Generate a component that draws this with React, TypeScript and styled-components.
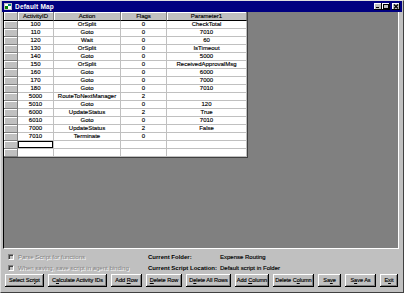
import React from 'react';
import styled, { createGlobalStyle } from 'styled-components';

const Global = createGlobalStyle`
  html, body { margin: 0; padding: 0; background: #c0c0c0; }
  body {
    width: 404px; height: 293px; overflow: hidden;
    font-family: "Liberation Sans", Arial, sans-serif;
  }
`;

const Window = styled.div`
  width: 404px;
  height: 293px;
  box-sizing: border-box;
  display: flex;
  flex-direction: column;
  background: #c0c0c0;
  border-top: 1px solid #dfdfdf;
  border-left: 1px solid #dfdfdf;
  border-right: 1px solid #404040;
  border-bottom: 1px solid #404040;
  padding: 0 1px 1px 1px;
`;

const TitleBar = styled.div`
  height: 11px;
  background: #000080;
  display: flex;
  align-items: center;
  padding: 0 2px 0 2px;
  gap: 3px;
  flex: none;
`;

const TitleText = styled.span`
  color: #fff;
  font-weight: bold;
  font-size: 6.5px;
  line-height: 11px;
  flex: 1;
  letter-spacing: 0.2px;
`;

const TitleButtons = styled.div`
  display: flex;
  align-items: center;
`;

const CapButton = styled.div<{ $gap?: boolean }>`
  width: 8px;
  height: 7px;
  background: #c0c0c0;
  box-shadow: inset -1px -1px #000, inset 1px 1px #fff;
  margin-left: ${(p) => (p.$gap ? '2px' : '0')};
  display: flex;
  align-items: center;
  justify-content: center;
`;

const Client = styled.div`
  height: 237px;
  flex: none;
  margin: 0 3px 0 1px;
  background: #808080;
  box-sizing: border-box;
  border-left: 1px solid #000;
  border-right: 1px solid #fff;
  border-bottom: 1px solid #fff;
  display: flex;
  align-items: flex-start;
`;

const Grid = styled.table`
  border-collapse: separate;
  border-spacing: 0;
  table-layout: fixed;
  width: 243px;
  background: #fff;
  font-size: 6px;
  color: #000;
  -webkit-text-stroke: 0.15px #000;
  border-right: 1px solid #404040;
  border-bottom: 1px solid #404040;
`;

const HeadCell = styled.th`
  height: 8px;
  padding: 0;
  font-weight: normal;
  line-height: 8px;
  text-align: center;
  background: #c0c0c0;
  border-bottom: 1px solid #000;
  border-right: 1px solid #808080;
  box-shadow: inset 1px 1px #fff;
  overflow: hidden;
  white-space: nowrap;
`;

const RowHead = styled.td`
  height: 7px;
  padding: 0;
  background: #c0c0c0;
  border-bottom: 1px solid #808080;
  border-right: 1px solid #808080;
  box-shadow: inset 1px 1px #fff;
`;

const Cell = styled.td<{ $sel?: boolean }>`
  height: 7px;
  padding: 0;
  line-height: 7px;
  text-align: center;
  white-space: nowrap;
  overflow: hidden;
  border-bottom: 1px solid #c0c0c0;
  border-right: 1px solid #c0c0c0;
  box-shadow: ${(p) => (p.$sel ? 'inset 0 0 0 1px #000' : 'none')};
`;

const Panel = styled.div`
  flex: 1;
  display: flex;
  flex-direction: column;
  padding: 2px 0 0 3px;
`;

const Info = styled.div`
  display: grid;
  grid-template-columns: 143px 72px 1fr;
  grid-auto-rows: 11px;
  align-items: center;
  font-size: 6px;
`;

const CheckRow = styled.div`
  display: flex;
  align-items: center;
  gap: 4px;
  padding-left: 3px;
`;

const Box = styled.span`
  width: 6px;
  height: 6px;
  box-sizing: border-box;
  background: #c0c0c0;
  border-top: 1px solid #808080;
  border-left: 1px solid #808080;
  border-right: 1px solid #fff;
  border-bottom: 1px solid #fff;
  box-shadow: inset 1px 1px #404040;
`;

const Disabled = styled.span`
  color: #808080;
  text-shadow: 1px 1px 0 #fff;
  white-space: nowrap;
`;

const Label = styled.span`
  font-weight: bold;
  white-space: nowrap;
`;

const Value = styled.span`
  white-space: nowrap;
  -webkit-text-stroke: 0.15px #000;
`;

const Buttons = styled.div`
  display: flex;
  gap: 4px;
  margin-top: 1px;
`;

const Btn = styled.button<{ $w: number }>`
  width: ${(p) => p.$w}px;
  height: 13px;
  padding: 0;
  margin: 0;
  font-family: "Liberation Sans", Arial, sans-serif;
  font-size: 5.6px;
  line-height: 11px;
  letter-spacing: -0.05px;
  color: #000;
  -webkit-text-stroke: 0.15px #000;
  background: #c0c0c0;
  border: none;
  box-shadow: inset -1px -1px #000, inset 1px 1px #fff, inset -2px -2px #808080;
  white-space: nowrap;
  text-align: center;
  overflow: visible;
`;

const rows: [string, string, string, string][] = [
  ['100', 'OrSplit', '0', 'CheckTotal'],
  ['110', 'Goto', '0', '7010'],
  ['120', 'Wait', '0', '60'],
  ['130', 'OrSplit', '0', 'IsTimeout'],
  ['140', 'Goto', '0', '5000'],
  ['150', 'OrSplit', '0', 'ReceivedApprovalMsg'],
  ['160', 'Goto', '0', '6000'],
  ['170', 'Goto', '0', '7000'],
  ['180', 'Goto', '0', '7010'],
  ['5000', 'RouteToNextManager', '2', ''],
  ['5010', 'Goto', '0', '120'],
  ['6000', 'UpdateStatus', '2', 'True'],
  ['6010', 'Goto', '0', '7010'],
  ['7000', 'UpdateStatus', '2', 'False'],
  ['7010', 'Terminate', '0', ''],
];

export default function App() {
  return (
    <>
      <Global />
      <Window>
        <TitleBar>
          <svg width="8" height="7" viewBox="0 0 8 7">
            <rect x="0" y="0" width="8" height="7" fill="#c0c0c0" />
            <rect x="1" y="1" width="6" height="5" fill="#fff" />
            <rect x="1" y="3" width="3" height="3" fill="#008000" />
            <rect x="4" y="1" width="3" height="2" fill="#008080" />
          </svg>
          <TitleText>Default Map</TitleText>
          <TitleButtons>
            <CapButton>
              <svg width="6" height="5" viewBox="0 0 6 5">
                <rect x="1" y="3" width="3" height="1" fill="#000" />
              </svg>
            </CapButton>
            <CapButton>
              <svg width="6" height="5" viewBox="0 0 6 5">
                <rect x="0.5" y="0.5" width="5" height="4" fill="none" stroke="#000" strokeWidth="1" />
                <rect x="0" y="0" width="6" height="1" fill="#000" />
              </svg>
            </CapButton>
            <CapButton $gap>
              <svg width="6" height="5" viewBox="0 0 6 5">
                <path d="M1 0.5 L5 4.5 M5 0.5 L1 4.5" stroke="#000" strokeWidth="1.2" />
              </svg>
            </CapButton>
          </TitleButtons>
        </TitleBar>
        <Client>
          <Grid>
            <colgroup>
              <col style={{ width: 14 }} />
              <col style={{ width: 36 }} />
              <col style={{ width: 67 }} />
              <col style={{ width: 46 }} />
              <col style={{ width: 80 }} />
            </colgroup>
            <thead>
              <tr>
                <HeadCell />
                <HeadCell>ActivityID</HeadCell>
                <HeadCell>Action</HeadCell>
                <HeadCell>Flags</HeadCell>
                <HeadCell>Parameter1</HeadCell>
              </tr>
            </thead>
            <tbody>
              {rows.map((r) => (
                <tr key={r[0]}>
                  <RowHead />
                  {r.map((c, i) => (
                    <Cell key={i}>{c}</Cell>
                  ))}
                </tr>
              ))}
              <tr>
                <RowHead />
                <Cell $sel />
                <Cell />
                <Cell />
                <Cell />
              </tr>
              <tr>
                <RowHead />
                <Cell />
                <Cell />
                <Cell />
                <Cell />
              </tr>
            </tbody>
          </Grid>
        </Client>
        <Panel>
          <Info>
            <CheckRow>
              <Box />
              <Disabled>Parse Script for functions</Disabled>
            </CheckRow>
            <Label>Current Folder:</Label>
            <Value>Expense Routing</Value>
            <CheckRow>
              <Box />
              <Disabled>When saving, save script in agent binding</Disabled>
            </CheckRow>
            <Label>Current Script Location:</Label>
            <Value>Default script in Folder</Value>
          </Info>
          <Buttons>
            <Btn $w={39}>Select Scr<u>i</u>pt</Btn>
            <Btn $w={59}>C<u>a</u>lculate Activity IDs</Btn>
            <Btn $w={31}>Add <u>R</u>ow</Btn>
            <Btn $w={36}><u>D</u>elete Row</Btn>
            <Btn $w={45}>D<u>e</u>lete All Rows</Btn>
            <Btn $w={34}>Add <u>C</u>olumn</Btn>
            <Btn $w={41}>Delete C<u>o</u>lumn</Btn>
            <Btn $w={23}>Sa<u>v</u>e</Btn>
            <Btn $w={31}>S<u>a</u>ve As</Btn>
            <Btn $w={18}>E<u>x</u>it</Btn>
          </Buttons>
        </Panel>
      </Window>
    </>
  );
}
